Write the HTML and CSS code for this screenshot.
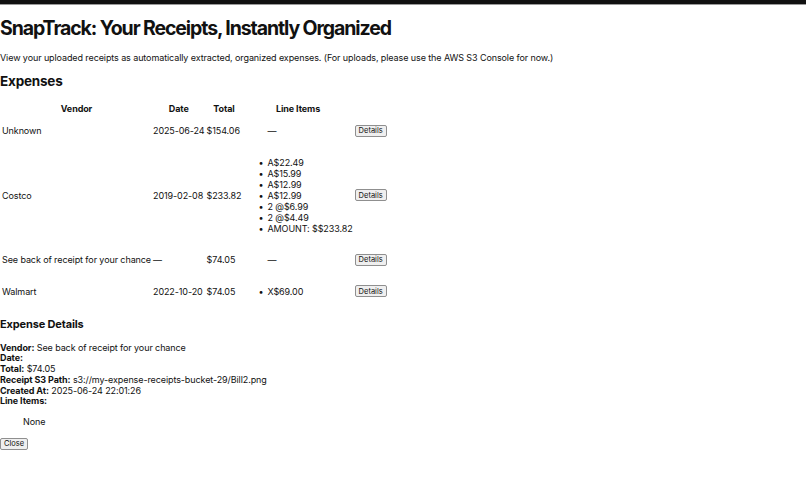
FILE: index.html
```html
<!DOCTYPE html>
<html>
<head>
<meta charset="utf-8">
<title>SnapTrack</title>
<link rel="stylesheet" href="styles.css">
</head>
<body>
<div class="topbar"></div>
<h1 class="title">SnapTrack: Your Receipts, Instantly Organized</h1>
<p class="intro">View your uploaded receipts as automatically extracted, organized expenses. (For uploads, please use the AWS S3 Console for now.)</p>
<h2 class="section">Expenses</h2>
<table class="expenses">
  <thead>
    <tr><th>Vendor</th><th>Date</th><th>Total</th><th>Line Items</th><th></th></tr>
  </thead>
  <tbody>
    <tr>
      <td>Unknown</td><td>2025-06-24</td><td>$154.06</td>
      <td><p class="none">—</p></td>
      <td><button class="btn">Details</button></td>
    </tr>
    <tr>
      <td>Costco</td><td>2019-02-08</td><td>$233.82</td>
      <td><ul class="items"><li>A$22.49</li><li>A$15.99</li><li>A$12.99</li><li>A$12.99</li><li>2 @$6.99</li><li>2 @$4.49</li><li>AMOUNT: $$233.82</li></ul></td>
      <td><button class="btn">Details</button></td>
    </tr>
    <tr>
      <td>See back of receipt for your chance</td><td>—</td><td>$74.05</td>
      <td><p class="none">—</p></td>
      <td><button class="btn">Details</button></td>
    </tr>
    <tr>
      <td>Walmart</td><td>2022-10-20</td><td>$74.05</td>
      <td><ul class="items"><li>X$69.00</li></ul></td>
      <td><button class="btn">Details</button></td>
    </tr>
  </tbody>
</table>
<section class="details">
  <h3 class="details-title">Expense Details</h3>
  <div class="field"><strong>Vendor:</strong> See back of receipt for your chance</div>
  <div class="field"><strong>Date:</strong> </div>
  <div class="field"><strong>Total:</strong> $74.05</div>
  <div class="field"><strong>Receipt S3 Path:</strong> s3://my-expense-receipts-bucket-29/Bill2.png</div>
  <div class="field"><strong>Created At:</strong> 2025-06-24 22:01:26</div>
  <div class="field"><strong>Line Items:</strong></div>
  <p class="empty-items">None</p>
  <button class="btn">Close</button>
</section>
</body>
</html>
```
FILE: styles.css
```css
html, body {
  margin: 0;
  padding: 0;
  background: #fff;
}
body {
  font-family: Inter, "Liberation Sans", Arial, sans-serif;
  font-size: 9px;
  letter-spacing: -0.1px;
  line-height: 11px;
  color: #111;
}
.topbar {
  height: 4px;
  background: #111;
  border-bottom: 1px solid #9a9a9a;
}
.title {
  font-size: 19.5px;
  letter-spacing: -1.1px;
  line-height: 23px;
  font-weight: bold;
  margin: 12px 0 12px;
}
.intro {
  margin: 0 0 10px;
}
.section {
  font-size: 13.5px;
  letter-spacing: -0.2px;
  line-height: 17px;
  font-weight: bold;
  margin: 1px 0 11.5px;
}
.expenses {
  border-collapse: separate;
  border-spacing: 2px;
  margin-left: 0;
}
.expenses th {
  font-weight: bold;
  text-align: center;
  line-height: 10px;
  padding: 0;
}
.expenses td {
  padding: 1px 0;
  text-align: left;
  vertical-align: middle;
}
.none {
  margin: 8.5px 0;
  padding-left: 24px;
}
.items {
  margin: 8px 0;
  padding-left: 24px;
  list-style: none;
}
.items li::before {
  content: "•";
  display: inline-block;
  width: 9px;
  margin-left: -9px;
}
.btn {
  font-family: Inter, "Liberation Sans", Arial, sans-serif;
  font-size: 7.5px;
  letter-spacing: 0;
  line-height: 9px;
  height: 12px;
  padding: 0 3px;
  margin: 0;
  background: #efefef;
  border: 1px solid #8f8f8f;
  border-radius: 2px;
  color: #111;
}
.details {
  margin-top: 9.5px;
}
.details-title {
  font-size: 11px;
  letter-spacing: -0.15px;
  line-height: 14px;
  font-weight: bold;
  margin: 0 0 11.5px;
}
.field {
  line-height: 10.8px;
}
.empty-items {
  margin: 9px 0 10px 23px;
}
```
